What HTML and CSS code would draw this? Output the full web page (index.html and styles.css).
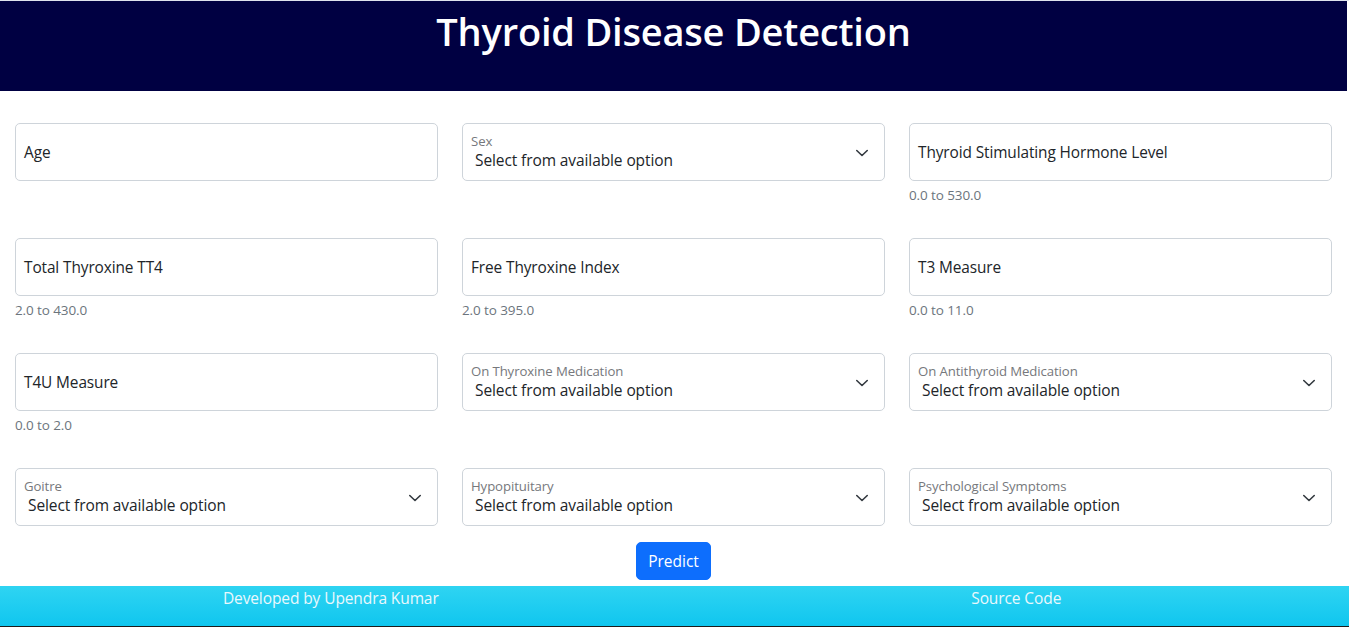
FILE: index.html
```html
<!DOCTYPE html>
<html lang="en">
<head>
<meta charset="utf-8">
<title>Thyroid Disease Detection</title>
<link rel="stylesheet" href="styles.css">
</head>
<body>
<div class="page">
  <header class="top">
    <h1 class="title">Thyroid Disease Detection</h1>
  </header>

  <main class="form">
    <div class="grid">
      <div class="cell">
        <div class="field"><span class="ph">Age</span></div>
      </div>
      <div class="cell">
        <div class="field select">
          <span class="flabel">Sex</span>
          <span class="value">Select from available option</span>
          <svg class="chev" viewBox="0 0 16 12" width="14" height="10" preserveAspectRatio="none"><path d="M2 3l6 6 6-6" fill="none" stroke="#343a40" stroke-width="1.8" stroke-linecap="round" stroke-linejoin="round"/></svg>
        </div>
      </div>
      <div class="cell">
        <div class="field"><span class="ph">Thyroid Stimulating Hormone Level</span></div>
        <div class="help">0.0 to 530.0</div>
      </div>

      <div class="cell">
        <div class="field"><span class="ph">Total Thyroxine TT4</span></div>
        <div class="help">2.0 to 430.0</div>
      </div>
      <div class="cell">
        <div class="field"><span class="ph">Free Thyroxine Index</span></div>
        <div class="help">2.0 to 395.0</div>
      </div>
      <div class="cell">
        <div class="field"><span class="ph">T3 Measure</span></div>
        <div class="help">0.0 to 11.0</div>
      </div>

      <div class="cell">
        <div class="field"><span class="ph">T4U Measure</span></div>
        <div class="help">0.0 to 2.0</div>
      </div>
      <div class="cell">
        <div class="field select">
          <span class="flabel">On Thyroxine Medication</span>
          <span class="value">Select from available option</span>
          <svg class="chev" viewBox="0 0 16 12" width="14" height="10" preserveAspectRatio="none"><path d="M2 3l6 6 6-6" fill="none" stroke="#343a40" stroke-width="1.8" stroke-linecap="round" stroke-linejoin="round"/></svg>
        </div>
      </div>
      <div class="cell">
        <div class="field select">
          <span class="flabel">On Antithyroid Medication</span>
          <span class="value">Select from available option</span>
          <svg class="chev" viewBox="0 0 16 12" width="14" height="10" preserveAspectRatio="none"><path d="M2 3l6 6 6-6" fill="none" stroke="#343a40" stroke-width="1.8" stroke-linecap="round" stroke-linejoin="round"/></svg>
        </div>
      </div>

      <div class="cell">
        <div class="field select">
          <span class="flabel">Goitre</span>
          <span class="value">Select from available option</span>
          <svg class="chev" viewBox="0 0 16 12" width="14" height="10" preserveAspectRatio="none"><path d="M2 3l6 6 6-6" fill="none" stroke="#343a40" stroke-width="1.8" stroke-linecap="round" stroke-linejoin="round"/></svg>
        </div>
      </div>
      <div class="cell">
        <div class="field select">
          <span class="flabel">Hypopituitary</span>
          <span class="value">Select from available option</span>
          <svg class="chev" viewBox="0 0 16 12" width="14" height="10" preserveAspectRatio="none"><path d="M2 3l6 6 6-6" fill="none" stroke="#343a40" stroke-width="1.8" stroke-linecap="round" stroke-linejoin="round"/></svg>
        </div>
      </div>
      <div class="cell">
        <div class="field select">
          <span class="flabel">Psychological Symptoms</span>
          <span class="value">Select from available option</span>
          <svg class="chev" viewBox="0 0 16 12" width="14" height="10" preserveAspectRatio="none"><path d="M2 3l6 6 6-6" fill="none" stroke="#343a40" stroke-width="1.8" stroke-linecap="round" stroke-linejoin="round"/></svg>
        </div>
      </div>
    </div>

    <div class="actions">
      <button class="btn" type="button">Predict</button>
    </div>
  </main>

  <footer class="foot">
    <div class="fcol">Developed by Upendra Kumar</div>
    <div class="fcol">Source Code</div>
  </footer>
</div>
</body>
</html>
```

FILE: styles.css
```css
html, body {
  margin: 0;
  padding: 0;
  background: #ffffff;
}
body {
  font-family: "Open Sans", "Noto Sans", "DejaVu Sans", sans-serif;
  color: #212529;
  overflow: hidden;
}
.page {
  border-top: 1px solid #dfe3ee;
  padding-right: 2px;
  overflow: hidden;
}
.top {
  background: #000042;
  height: 90px;
}
.title {
  margin: 0;
  padding-top: 6px;
  text-align: center;
  color: #ffffff;
  font-size: 38px;
  line-height: 48px;
  font-weight: 600;
  letter-spacing: -0.2px;
}
.form {
  padding: 32px 15px 0 15px;
}
.grid {
  display: grid;
  grid-template-columns: repeat(3, 1fr);
  column-gap: 24px;
  row-gap: 32px;
}
.field {
  position: relative;
  height: 58px;
  box-sizing: border-box;
  border: 1px solid #ced4da;
  border-radius: 5px;
  display: flex;
  align-items: center;
  padding: 1px 8px 0 8px;
}
.ph {
  font-size: 15.4px;
  color: #212529;
  letter-spacing: -0.1px;
}
.field.select {
  flex-direction: column;
  align-items: flex-start;
  justify-content: flex-start;
  padding: 8px 40px 0 8px;
}
.flabel {
  font-size: 13.2px;
  line-height: 18px;
  color: #76787c;
  letter-spacing: -0.1px;
}
.value {
  font-size: 15.5px;
  line-height: 20px;
  padding-left: 4px;
  color: #212529;
  letter-spacing: -0.1px;
}
.chev {
  position: absolute;
  right: 15px;
  top: 24px;
}
.help {
  margin-top: 4px;
  font-size: 13.5px;
  line-height: 21px;
  color: #6c757d;
  letter-spacing: -0.1px;
}
.actions {
  display: flex;
  justify-content: center;
  padding-top: 16px;
  padding-bottom: 6px;
}
.btn {
  font-family: inherit;
  background: #0d6efd;
  color: #ffffff;
  border: 1px solid #0d6efd;
  border-radius: 5px;
  width: 75px;
  height: 38px;
  font-size: 15.5px;
  padding: 0;
  cursor: pointer;
}
.foot {
  display: grid;
  grid-template-columns: 1fr 1fr;
  margin: 0 -12px;
  height: 40px;
  background: linear-gradient(to bottom, #2fd4f2, #10c6ef);
  border-bottom: 1px solid #1c1c1c;
}
.fcol {
  text-align: center;
  color: #eaf8fd;
  font-size: 15.5px;
  line-height: 24px;
  letter-spacing: -0.1px;
}
```
